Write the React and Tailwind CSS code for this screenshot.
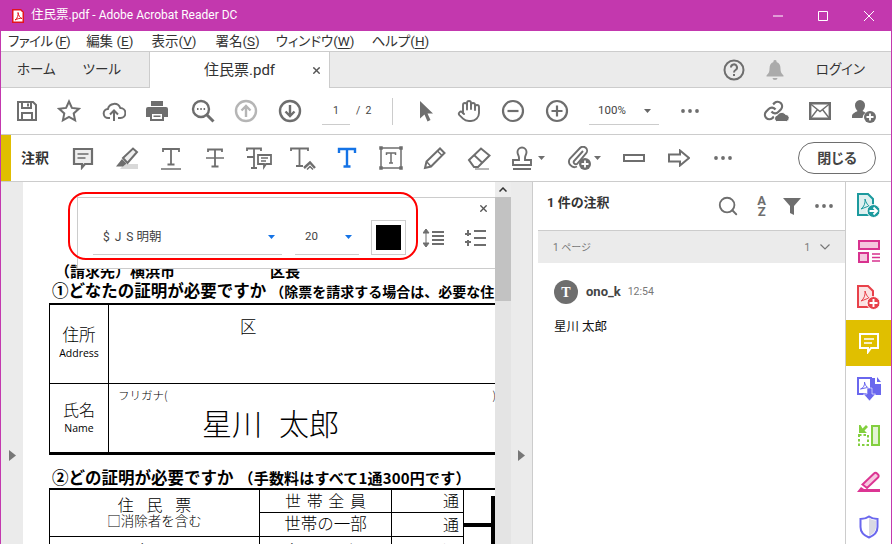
import { Hand, Search, X } from 'lucide-react';

const Caret = ({ className }) => (
  <svg width="7" height="4" viewBox="0 0 7 4" className={className}>
    <path d="M0 0h7L3.500 4z" fill="currentColor" />
  </svg>
);

const Dots = () => (
  <svg width="18" height="4" viewBox="0 0 18 4" fill="currentColor">
    <circle cx="2" cy="2" r="1.9" />
    <circle cx="9" cy="2" r="1.9" />
    <circle cx="16" cy="2" r="1.9" />
  </svg>
);

const Svg = ({ w = 24, h = 24, children }) => (
  <svg width={w} height={h} viewBox={`0 0 ${w} ${h}`} fill="none" stroke="currentColor" strokeWidth="2">
    {children}
  </svg>
);

const TopIcons = {
  save: (
    <Svg>
      <path d="M3 3h15l3 3v15H3z" />
      <path d="M7 3v6h9V3M13 4.500v3M7 21v-7h10v7" />
    </Svg>
  ),
  star: (
    <Svg>
      <path d="M12 2.500l2.900 6.400 7 .8-5.200 4.700 1.400 6.900-6.100-3.500-6.100 3.500 1.400-6.900-5.200-4.700 7-.8z" />
    </Svg>
  ),
  upload: (
    <Svg>
      <path d="M8 19H6.500a4.500 4.500 0 0 1-.6-9 6.500 6.500 0 0 1 12.400-1 5 5 0 0 1 .2 10H16" />
      <path d="M12 22v-10M8 15.500l4-4 4 4" />
    </Svg>
  ),
  print: (
    <svg width="24" height="24" viewBox="0 0 24 24" fill="currentColor">
      <path d="M6 2h12v5H6z" />
      <path fillRule="evenodd" d="M3 8h18a2 2 0 0 1 2 2v8h-4v4H5v-4H1v-8a2 2 0 0 1 2-2zm4 7v5h10v-5zm1.500 1.500h7V18h-7z" />
    </svg>
  ),
  zoom: (
    <Svg>
      <circle cx="10" cy="10" r="8" strokeWidth="2.400" />
      <path d="M16 16l6.500 6.500" strokeWidth="3" />
      <path d="M6 10h1.500M9.300 10h1.500M12.600 10h1.500" />
    </Svg>
  ),
  up: (
    <Svg>
      <circle cx="12" cy="12" r="10" strokeWidth="2.400" />
      <path d="M12 18V7M7.500 11.500L12 7l4.500 4.500" strokeWidth="2.400" />
    </Svg>
  ),
  down: (
    <Svg>
      <circle cx="12" cy="12" r="10" strokeWidth="2.400" />
      <path d="M12 6v11M7.500 12.500L12 17l4.500-4.500" strokeWidth="2.400" />
    </Svg>
  ),
  pointer: (
    <svg width="24" height="24" viewBox="0 0 24 24" fill="currentColor">
      <path d="M6 2l13 12.500h-5.500l3 6.500-3 1.500-3-7L6 19.500z" />
    </svg>
  ),
  minus: (
    <Svg>
      <circle cx="12" cy="12" r="10" strokeWidth="2.200" />
      <path d="M6.500 12h11" strokeWidth="2.200" />
    </Svg>
  ),
  plus: (
    <Svg>
      <circle cx="12" cy="12" r="10" strokeWidth="2.200" />
      <path d="M6.500 12h11M12 6.500v11" strokeWidth="2.200" />
    </Svg>
  ),
  link: (
    <svg width="26" height="24" viewBox="0 0 26 24" fill="none" stroke="currentColor" strokeWidth="2.200">
      <path d="M8.500 12.500a4.500 4.500 0 0 0 6.800.5l2.700-2.800a4.500 4.500 0 0 0-6.400-6.300l-1.500 1.500" />
      <path d="M12.500 10.500a4.500 4.500 0 0 0-6.800-.5l-2.700 2.800a4.500 4.500 0 0 0 6.400 6.300l1.500-1.500" />
      <path d="M13.500 22.500a3.300 3.300 0 0 1 .8-6.300 4.800 4.800 0 0 1 8.200-.8 3.600 3.600 0 0 1 1 7.100z" fill="currentColor" stroke="#fff" strokeWidth="1" />
    </svg>
  ),
  mail: (
    <svg width="22" height="18" viewBox="0 0 22 18" fill="none" stroke="currentColor" strokeWidth="2.400">
      <path d="M1.200 1.200h19.600v15.600H1.200z" />
      <path d="M1 1.500l10 8 10-8M1.500 16.500l7-9M20.500 16.500l-7-9" strokeWidth="1.400" />
    </svg>
  ),
  user: (
    <svg width="26" height="24" viewBox="0 0 26 24" fill="currentColor">
      <path d="M9 1a5 5 0 0 1 5 5.500c0 2.500-1.500 4.500-2.500 5.500 1 .7 2 1 3 1.800a7 7 0 0 0-3 5.200H1v-2c0-2.500 4-4 5.500-5C5.500 11 4 9 4 6.500A5 5 0 0 1 9 1z" />
      <circle cx="19" cy="18" r="6" />
      <path d="M19 14.500v7M15.500 18h7" stroke="#fff" strokeWidth="1.800" />
    </svg>
  ),
};

const AnnotIcons = {
  comment: (
    <Svg>
      <path d="M3 3h18v15h-7l-3 3.500V18H3z" strokeWidth="2.200" fill="#efefef" />
      <path d="M6.500 8h11M6.500 12h8" strokeWidth="1.500" />
    </Svg>
  ),
  highlight: (
    <svg width="24" height="24" viewBox="0 0 24 24">
      <path d="M5 23h18v-5H9z" fill="#d9d9d9" />
      <path d="M8 12L18 2.500l4 3.500-9.500 11z" fill="#efefef" stroke="currentColor" strokeWidth="2" />
      <path d="M7 13l4.500 4.500-3.500 3H1z" fill="currentColor" />
    </svg>
  ),
  underline: (
    <Svg>
      <path d="M4 6V3h16v3M12 3v16M8.500 18.500h7" strokeWidth="1.800" />
      <path d="M2 23h20" strokeWidth="1.500" />
    </Svg>
  ),
  strike: (
    <Svg>
      <path d="M5 6V3.500h14V6M12 3.500v17M8.500 20.500h7" strokeWidth="1.800" />
      <path d="M3 12h18" strokeWidth="1.500" />
    </Svg>
  ),
  replace: (
    <svg width="26" height="24" viewBox="0 0 26 24" fill="none" stroke="currentColor" strokeWidth="1.800">
      <path d="M1 5V2.500h14V5M8 2.500V22M5 22h6M1 11h7" />
      <path d="M12 9h13v9h-5l-2 3v-3h-6z" fill="#fff" />
      <path d="M15 12h7M15 15h5" strokeWidth="1.300" />
    </svg>
  ),
  insert: (
    <svg width="26" height="24" viewBox="0 0 26 24" fill="none" stroke="currentColor" strokeWidth="1.800">
      <path d="M1 5V2.500h17V5M9.500 2.500V20M6 20h7" />
      <path d="M14 22l6-5.500 5 5.500" strokeWidth="2.400" />
      <path d="M17 23.500l3-3 3 3" strokeWidth="1.500" />
    </svg>
  ),
  text: (
    <Svg>
      <path d="M4 7V3h16v4M12 3v17.500M8.500 20.500h7" strokeWidth="2.400" />
    </Svg>
  ),
  textbox: (
    <Svg>
      <path d="M2 2h20v20H2z" strokeWidth="1.500" />
      <path d="M7.500 9V7h9v2M12 7v10M10 17h4" strokeWidth="1.500" />
      <path d="M1 1h2v2H1zM21 1h2v2h-2zM1 21h2v2H1zM21 21h2v2h-2z" strokeWidth="1.500" fill="currentColor" />
    </Svg>
  ),
  pencil: (
    <Svg>
      <path d="M2 22l1.500-6.500L17 2.500l4.500 4.500L8 20.500z" strokeWidth="2" />
      <path d="M3.500 15.500L8 20.500M14.500 5l4.500 4.500" strokeWidth="1.500" />
    </Svg>
  ),
  eraser: (
    <Svg>
      <path d="M2 14L14 2.500l8.500 7L11 21H7z" strokeWidth="2" />
      <path d="M7 9l8 7.500" strokeWidth="1.800" />
      <path d="M8 23h14" strokeWidth="1" />
    </Svg>
  ),
  stamp: (
    <Svg>
      <path d="M9 12c0-3-1.500-3-1.500-6a4.500 4.500 0 0 1 9 0c0 3-1.500 3-1.500 6v2h6v5H3v-5h6z" strokeWidth="1.900" />
      <path d="M3 23h18" strokeWidth="2" />
    </Svg>
  ),
  clip: (
    <svg width="24" height="24" viewBox="0 0 24 24" fill="none" stroke="currentColor" strokeWidth="1.900">
      <path d="M16 5l-9 10a2.200 2.200 0 0 0 3 3l9-10.500a4 4 0 0 0-6-5.500L3 12.500a5.500 5.500 0 0 0 7 8" />
      <circle cx="18" cy="18" r="6" fill="currentColor" stroke="none" />
      <path d="M18 14.500v7M14.500 18h7" stroke="#fff" strokeWidth="1.800" />
    </svg>
  ),
  line: (
    <svg width="22" height="8" viewBox="0 0 22 8" fill="none" stroke="currentColor" strokeWidth="2">
      <path d="M1 1h20v6H1z" />
    </svg>
  ),
  arrow: (
    <svg width="22" height="18" viewBox="0 0 22 18" fill="none" stroke="currentColor" strokeWidth="2">
      <path d="M1 5.500h11V1.500L21 9l-9 7.500v-4H1z" />
    </svg>
  ),
};

const RailFile = ({ color, fill, badgeMark }) => (
  <svg width="25" height="26" viewBox="0 0 25 26" fill="none">
    <path d="M2 2h10l5 5v16H2z" stroke={color} strokeWidth="2" fill={fill} />
    <path d="M5 17c3-2 4.500-6 4-10M9 7c1 4 3 7 6 8M5 17l8-3" stroke={color} strokeWidth="1" />
    <circle cx="17.500" cy="19" r="6.500" fill={color} stroke="#fff" strokeWidth="1" />
    <path d={badgeMark} stroke="#fff" strokeWidth="1.900" />
  </svg>
);

const RailIcons = [
  <RailFile key="a" color="#1c9a9e" fill="#def0f0" badgeMark="M13.500 19h7M17.500 15.500L21 19l-3.500 3.500" />,
  <svg key="b" width="22" height="23" viewBox="0 0 22 23" fill="none" stroke="#d8328f" strokeWidth="2">
    <path d="M1 1h20v8H1z" fill="#f5c6de" />
    <path d="M1 13h9v9H1z" fill="#f5c6de" />
    <path d="M14 14h8M14 17.500h8M14 21h8" strokeWidth="1.300" />
  </svg>,
  <RailFile key="c" color="#e8414a" fill="#fbe3e3" badgeMark="M13.500 19h8M17.500 15v8" />,
  <svg key="d" width="20" height="21" viewBox="0 0 20 21" fill="none" stroke="#fff" strokeWidth="2">
    <path d="M1 1h18v14h-7l-3 4v-4H1z" />
    <path d="M5 6h10M5 10h8" strokeWidth="1.600" />
  </svg>,
  <svg key="e" width="24" height="24" viewBox="0 0 24 24" fill="none">
    <path d="M1 1h13v16H1z" fill="#fff" stroke="#6a67ee" strokeWidth="2" />
    <path d="M3.500 12c3-1 4.500-4 4-7M7.500 5c.5 3 2 5 4 6M3.500 12l7-1.500" stroke="#6a67ee" strokeWidth="1" />
    <path d="M15 1h3v6h6v11h-9z" fill="#6a67ee" />
    <path d="M20 0l4 5h-4z" fill="#6a67ee" />
    <path d="M10 11h5v6h3.500l-6 7-6-7H10z" fill="#6a67ee" stroke="#fff" strokeWidth="0.600" />
  </svg>,
  <svg key="f" width="22" height="21" viewBox="0 0 22 21" fill="none" stroke="#82cf3e" strokeWidth="2">
    <path d="M14 1h7v19h-7z" fill="#e3f3d4" />
    <path d="M1 10h9v10H1z" strokeDasharray="2.500 2" />
    <path d="M1 0v8h8L6.500 5.500 10 2 8 0 4.500 3.500 2.500 0z" fill="#82cf3e" stroke="none" />
  </svg>,
  <svg key="g" width="24" height="21" viewBox="0 0 24 21" fill="none">
    <path d="M5.500 13.500L17 2.500a2 2 0 0 1 3 0l1 1a2 2 0 0 1 0 3L10 17z" stroke="#dc3593" strokeWidth="2" fill="#f7c8e0" />
    <path d="M0 21l4-5 3 2h16v3z" fill="#dc3593" />
  </svg>,
  <svg key="h" width="20" height="24" viewBox="0 0 20 24" fill="none">
    <path d="M10 3v18c4-2 7-5 7-9V5.500c-3 0-5-1-7-2.500z" fill="#d9d9e3" />
    <path d="M10 1.500c2 1.500 5 2.500 8.500 2.500v8c0 5-3.500 8.500-8.500 10.500C5 20.500 1.500 17 1.500 12V4C5 4 8 3 10 1.500z" stroke="#6a67ee" strokeWidth="2" />
  </svg>,
];

const Menu = ({ label, hotkey, spaced, className }) => (
  <span className={className}>
    {label}
    {spaced ? ' ' : ''}(<span className="underline underline-offset-2">{hotkey}</span>)
  </span>
);

const App = () => {
  return (
    <div className="w-[892px] h-[544px] overflow-hidden flex flex-col bg-white border-x border-[#c338ae] text-[#333] font-['Roboto','Noto_Sans_CJK_JP',sans-serif] [font-feature-settings:'palt']">
      {/* Title bar */}
      <div className="h-[31px] shrink-0 flex items-center bg-[#c338ae] text-white text-[12px] -mx-px">
        <svg width="14" height="14" viewBox="0 0 14 14" className="ml-[11px] mr-[6px]">
          <path d="M1 0h9l3 3v11H1z" fill="#e3131b" />
          <path d="M2.500 1.500h7l2 2v9h-9z" fill="#fff" />
          <path d="M4 11c2.500-1.500 3.500-5 3-7.500.5 3 2 5.500 4 6-2-.5-4.500.2-7 1.500z" fill="none" stroke="#e3131b" strokeWidth="1" />
        </svg>
        <span className="flex-1"><span className="text-[12.500px]">住民票</span>.pdf - Adobe Acrobat Reader DC</span>
        <svg width="10" height="10" viewBox="0 0 10 10" stroke="#fff" className="mr-[35px]"><path d="M0 5h10" /></svg>
        <svg width="10" height="10" viewBox="0 0 10 10" fill="none" stroke="#fff" className="mr-[36px]"><path d="M.5.500h9v9h-9z" /></svg>
        <svg width="10" height="10" viewBox="0 0 10 10" stroke="#fff" className="mr-[18px]"><path d="M0 0l10 10M10 0L0 10" /></svg>
      </div>

      {/* Menu */}
      <div className="h-[21px] shrink-0 flex items-center gap-[16px] pl-[7px] text-[13.500px] border-b border-[#cccccc] text-[#333]">
        <Menu label="ファイル" hotkey="F" spaced className="tracking-[-0.6px]" />
        <Menu label="編集" hotkey="E" spaced />
        <Menu label="表示" hotkey="V" className="ml-[2px]" />
        <Menu label="署名" hotkey="S" className="ml-[3px]" />
        <Menu label="ウィンドウ" hotkey="W" />
        <Menu label="ヘルプ" hotkey="H" className="ml-[1px]" />
      </div>

      {/* Tabs */}
      <div className="h-[36px] shrink-0 flex items-stretch bg-[#ebebeb] border-b border-[#cccccc] text-[13.500px]">
        <div className="w-[148px] flex items-center pl-[16px] gap-[27px]">
          <span>ホーム</span>
          <span>ツール</span>
        </div>
        <div className="w-[181px] h-[36px] flex items-center bg-white border-x border-[#cccccc] pl-[54px]">
          <span className="flex-1 text-[15px]">住民票.pdf</span>
          <X size={11} strokeWidth={3} className="mr-[7px] text-[#555]" />
        </div>
        <div className="flex-1 flex items-center justify-end">
          <svg width="22" height="22" viewBox="0 0 22 22" fill="none" stroke="#6e6e6e" strokeWidth="2" className="mr-[21px]">
            <circle cx="11" cy="11" r="9.500" />
            <path d="M8 8.500a3 3 0 1 1 4.500 2.500c-1 .6-1.500 1-1.500 2.500M11 15v2" />
          </svg>
          <svg width="18" height="20" viewBox="0 0 18 20" fill="#ababab" className="mr-[32px]">
            <path d="M9 0a1.500 1.500 0 0 1 1.500 2C13.500 3 14.500 5.500 14.500 9c0 3 1 4.500 3 6.500v1H.500v-1c2-2 3-3.500 3-6.500 0-3.500 1-6 4-7A1.500 1.500 0 0 1 9 0zM6.500 18h5a2.500 2 0 0 1-5 0z" />
          </svg>
          <span className="mr-[26px]">ログイン</span>
        </div>
      </div>

      {/* Main toolbar */}
      <div className="h-[47px] shrink-0 flex items-center border-b border-[#cccccc] text-[#6e6e6e]">
        <div className="ml-[14px] w-[24px]">{TopIcons.save}</div>
        <div className="ml-[18px] w-[24px]">{TopIcons.star}</div>
        <div className="ml-[21px] w-[24px]">{TopIcons.upload}</div>
        <div className="ml-[19px] w-[24px]">{TopIcons.print}</div>
        <div className="ml-[22px] w-[24px]">{TopIcons.zoom}</div>
        <div className="ml-[19px] w-[24px] text-[#b5b5b5]">{TopIcons.up}</div>
        <div className="ml-[20px] w-[24px]">{TopIcons.down}</div>
        <div className="ml-[20px] w-[28px] h-[28px] flex items-center justify-center border-b border-[#cccccc] text-[10.500px] text-[#444]">1</div>
        <span className="ml-[6px] w-[15px] text-[10.500px] text-[#444] whitespace-pre">/  2</span>
        <div className="ml-[21px] w-px h-[27px] bg-[#cccccc]" />
        <div className="ml-[21px] w-[24px]">{TopIcons.pointer}</div>
        <div className="ml-[19px] w-[24px]">
          <Hand size={24} strokeWidth={1.900} />
        </div>
        <div className="ml-[20px] w-[24px]">{TopIcons.minus}</div>
        <div className="ml-[20px] w-[24px]">{TopIcons.plus}</div>
        <div className="ml-[20px] w-[70px] h-[28px] flex items-center border-b border-[#cccccc] text-[11.500px] text-[#444] pl-[9px]">
          <span className="flex-1">100%</span>
          <Caret className="mr-[8px] text-[#666]" />
        </div>
        <div className="ml-[22px] w-[18px] flex items-center"><Dots /></div>
        <div className="ml-[64px] w-[26px]">{TopIcons.link}</div>
        <div className="ml-[20px] w-[22px]">{TopIcons.mail}</div>
        <div className="ml-[20px] w-[26px]">{TopIcons.user}</div>
      </div>

      {/* Comment toolbar */}
      <div className="h-[47px] shrink-0 flex items-center border-b border-[#cccccc] text-[#6e6e6e]">
        <div className="w-[10px] h-full bg-[#e0bf00]" />
        <span className="ml-[10px] w-[40px] text-[14px] font-bold text-[#333]">注釈</span>
        <div className="w-[44px] flex justify-center">{AnnotIcons.comment}</div>
        <div className="w-[44px] flex justify-center">{AnnotIcons.highlight}</div>
        <div className="w-[44px] flex justify-center">{AnnotIcons.underline}</div>
        <div className="w-[44px] flex justify-center">{AnnotIcons.strike}</div>
        <div className="w-[44px] flex justify-center">{AnnotIcons.replace}</div>
        <div className="w-[44px] flex justify-center">{AnnotIcons.insert}</div>
        <div className="w-[44px] flex justify-center text-[#1473e6]">{AnnotIcons.text}</div>
        <div className="w-[44px] flex justify-center">{AnnotIcons.textbox}</div>
        <div className="w-[44px] flex justify-center">{AnnotIcons.pencil}</div>
        <div className="w-[44px] flex justify-center">{AnnotIcons.eraser}</div>
        <div className="ml-[9px] flex items-center gap-[4px]">
          {AnnotIcons.stamp}
          <Caret />
        </div>
        <div className="ml-[22px] flex items-center gap-[3px]">
          {AnnotIcons.clip}
          <Caret />
        </div>
        <div className="ml-[22px] w-[22px]">{AnnotIcons.line}</div>
        <div className="ml-[23px] w-[22px]">{AnnotIcons.arrow}</div>
        <div className="ml-[24px] w-[18px] flex items-center"><Dots /></div>
        <div className="ml-[66px] w-[78px] h-[32px] flex items-center justify-center rounded-full border border-[#6e6e6e] text-[14px] font-bold text-[#444]">
          閉じる
        </div>
      </div>

      {/* Body */}
      <div className="flex-1 min-h-0 flex">
        <div className="w-[22px] shrink-0 bg-[#ebebeb] flex items-center justify-center text-[#777] pt-[184px]">
          <svg width="7" height="11" viewBox="0 0 7 11" fill="currentColor"><path d="M0 0l7 5.500L0 11z" /></svg>
        </div>

        {/* Document */}
        <div className="relative w-[472px] shrink-0 overflow-hidden bg-white pl-[26px] pt-[79px] text-black font-['Noto_Sans_CJK_JP',sans-serif] [font-feature-settings:normal]">
          <div className="w-[446px] h-[20px] flex text-[15px] font-bold leading-[20px] whitespace-nowrap">
            <span className="ml-[6px] w-[215px]">（請求先）横浜市</span>
            <span>区長</span>
          </div>
          <div className="w-[446px] h-[22px] overflow-hidden text-[16.500px] font-bold leading-[19px] whitespace-nowrap">
            <span className="ml-[3px]">①どなたの証明が必要ですか</span>
            <span className="ml-[4px] text-[14px]">（除票を請求する場合は、必要な住</span>
          </div>

          <div className="w-[446px] grid grid-cols-[59px_1fr] grid-rows-[79px_68px] border-t-2 border-l border-b-[3px] border-black box-content">
            <div className="flex flex-col items-center justify-center pb-[4px] border-r border-b border-black leading-none font-light">
              <span className="text-[16.500px]">住所</span>
              <span className="mt-[5px] text-[10.500px] font-['Open_Sans',sans-serif] font-normal">Address</span>
            </div>
            <div className="border-b border-black pl-[131px] pt-[9px] text-[16.500px] leading-[24px] font-light">区</div>
            <div className="flex flex-col items-center justify-center pb-[2px] border-r border-black leading-none font-light">
              <span className="text-[16px]">氏名</span>
              <span className="mt-[6px] text-[10.500px] font-['Open_Sans',sans-serif] font-normal">Name</span>
            </div>
            <div className="pl-[9px] font-light">
              <div className="flex justify-between pt-[3px] text-[11.500px] leading-[16px]">
                <span>フリガナ(</span>
                <span>)</span>
              </div>
              <div className="flex pl-[84px] text-[30px] leading-[38px]">
                <span>星川</span>
                <span className="ml-[17px]">太郎</span>
              </div>
            </div>
          </div>

          <div className="h-[33px] pt-[11px] pl-[3px] text-[16.500px] font-bold leading-[22px] whitespace-nowrap">
            ②どの証明が必要ですか<span className="ml-[5px] text-[15px] tracking-[0.2px]">（手数料はすべて1通300円です）</span>
          </div>

          <div className="w-[446px] h-[60px] flex border-t-2 border-l border-black font-light text-[16px] leading-none">
            <div className="w-[210px] shrink-0 border-r border-black">
              <div className="h-[47px] border-b border-black flex flex-col items-center pt-[6px]">
                <span className="tracking-[0.8em] -mr-[0.8em] text-[16px]">住民票</span>
                <span className="mt-[2px] text-[13.500px]">□消除者を含む</span>
              </div>
              <div className="pt-[5px] text-center tracking-[0.4em]">除票</div>
            </div>
            <div className="w-[132px] shrink-0 border-r border-black text-center">
              <div className="h-[23px] pb-[2px] border-b border-black flex items-center justify-center tracking-[0.35em] -mr-[0.35em]">世帯全員</div>
              <div className="h-[24px] pb-[2px] border-b border-black flex items-center justify-center text-[16.500px]">世帯の一部</div>
              <div className="pt-[5px] tracking-[0.3em]">全員一部</div>
            </div>
            <div className="w-[72px] shrink-0 text-right pr-[4px] border-r border-black">
              <div className="h-[23px] pb-[2px] border-b border-black flex items-center justify-end -mr-[4px] pr-[4px]">通</div>
              <div className="h-[24px] pb-[2px] border-b border-black flex items-center justify-end -mr-[4px] pr-[4px]">通</div>
              <div className="pt-[5px]">通</div>
            </div>
            <div className="flex-1">
              <div className="h-[31px] mt-[6px] border-r-4 border-b-4 border-black" />
              <div className="h-[24px] border-r-4 border-black" />
            </div>
          </div>

          {/* Red highlight around the font controls */}
          <div className="absolute left-[45px] top-[10px] w-[350px] h-[68px] rounded-[18px] border-2 border-[#ff0000] z-20" />

          {/* Text properties popup */}
          <div className="absolute left-[54px] top-[15px] w-[420px] h-[72px] bg-white border-t border-l border-b border-[#cccccc] z-10 font-['Roboto','Noto_Sans_CJK_JP',sans-serif] text-[#444]">
            <div className="flex justify-end h-[21px] pt-[5px] pr-[8px]">
              <X size={11} strokeWidth={3} className="text-[#555]" />
            </div>
            <div className="flex items-center mt-[1px]">
              <div className="ml-[15px] w-[189px] h-[35px] flex items-center border-b border-[#cccccc] pl-[10px] text-[12.500px]">
                <span className="tracking-[1px] text-[12px] whitespace-pre">$ J S</span>
                <span className="flex-1 ml-[2px]">明朝</span>
                <Caret className="mr-[7px] text-[#1473e6]" />
              </div>
              <div className="ml-[13px] w-[64px] h-[35px] flex items-center border-b border-[#cccccc] pl-[10px] text-[11.500px]">
                <span className="flex-1">20</span>
                <Caret className="mr-[7px] text-[#1473e6]" />
              </div>
              <div className="ml-[12px] -mt-[1px] w-[35px] h-[35px] p-[4px] border border-[#cccccc]">
                <div className="w-full h-full bg-black" />
              </div>
              <svg width="22" height="18" viewBox="0 0 22 18" fill="none" stroke="#6e6e6e" strokeWidth="2" className="ml-[17px]">
                <path d="M3 2v14M0 4l3-4 3 4zM0 14l3 4 3-4z" fill="#6e6e6e" strokeWidth="1" />
                <path d="M9 3h12M9 7h12M9 11h12M9 15h12" />
              </svg>
              <svg width="22" height="18" viewBox="0 0 22 18" fill="none" stroke="#6e6e6e" strokeWidth="2" className="ml-[20px]">
                <path d="M3 1v6M0 5h6M3 11v6M0 13h6" />
                <path d="M9 2h12M9 9h12M9 16h12" />
              </svg>
            </div>
          </div>
        </div>

        {/* Scrollbar */}
        <div className="w-[16px] shrink-0 flex flex-col bg-[#e4e4e4]">
          <div className="h-[15px] flex items-center justify-center bg-[#ededed]">
            <svg width="8" height="5" viewBox="0 0 8 5" fill="none" stroke="#333" strokeWidth="1.500"><path d="M.5 4.500L4 1l3.500 3.500" /></svg>
          </div>
          <div className="h-[104px] bg-[#c2c2c2]" />
        </div>

        <div className="w-[22px] shrink-0 bg-[#ebebeb] border-r border-[#cccccc] flex items-center justify-center text-[#777] pt-[184px]">
          <svg width="7" height="11" viewBox="0 0 7 11" fill="currentColor"><path d="M0 0l7 5.500L0 11z" /></svg>
        </div>

        {/* Comments panel */}
        <div className="w-[312px] shrink-0 flex flex-col">
          <div className="h-[48px] flex items-center pl-[14px] text-[#6e6e6e]">
            <span className="flex-1 -mt-[6px] text-[13px] font-bold text-[#333]">1 件の注釈</span>
            <Search size={22} strokeWidth={2} className="mr-[18px]" />
            <div className="mr-[17px] flex flex-col items-center text-[13px] font-bold leading-[11px]">
              <span>A</span>
              <span>Z</span>
            </div>
            <svg width="18" height="17" viewBox="0 0 18 17" fill="currentColor" className="mr-[14px]"><path d="M0 0h18l-7 8v9l-4-2V8z" /></svg>
            <div className="mr-[12px] flex"><Dots /></div>
          </div>
          <div className="ml-[5px] h-[33px] flex items-center bg-[#ebebeb] border-t border-[#cccccc] pl-[15px] text-[10px] text-[#777]">
            <span className="flex-1">1 ページ</span>
            <span className="mr-[10px]">1</span>
            <svg width="10" height="6" viewBox="0 0 10 6" fill="none" stroke="#777" strokeWidth="1.200" className="mr-[15px]"><path d="M.5.500L5 5 9.500.500" /></svg>
          </div>
          <div className="flex items-center pl-[21px] mt-[17px]">
            <div className="w-[24px] h-[24px] rounded-full bg-[#6e6e6e] flex items-center justify-center text-white text-[14px] font-bold font-['Liberation_Serif',serif]">T</div>
            <span className="ml-[8px] text-[13px] font-bold text-[#444]">ono_k</span>
            <span className="ml-[7px] text-[10.500px] text-[#777]">12:54</span>
          </div>
          <div className="pl-[21px] mt-[14px] text-[12.500px] text-[#111] whitespace-pre [font-feature-settings:normal]">星川 太郎</div>
        </div>

        {/* Right rail */}
        <div className="flex-1 flex flex-col border-l border-[#cccccc]">
          {RailIcons.map((icon, i) => (
            <div key={i} className={i === 3 ? 'h-[46px] shrink-0 flex items-center justify-center bg-[#e0bf00]' : 'h-[46px] shrink-0 flex items-center justify-center'}>
              {icon}
            </div>
          ))}
        </div>
      </div>
    </div>
  );
};

export default App;
